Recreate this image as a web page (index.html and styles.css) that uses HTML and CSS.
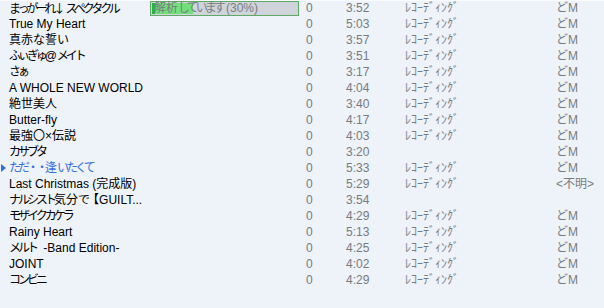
FILE: index.html
```html
<!DOCTYPE html>
<html>
<head>
<meta charset="utf-8">
<link rel="stylesheet" href="styles.css">
</head>
<body>
<div class="list">
  <div class="row"><span class="mark"></span><span class="title"><span class="k">まっがーれ</span><span class="arrow">↓</span><span class="k">スペクタクル</span></span><span class="status"><span class="bar"><span class="fill" style="width:28%"></span><span class="bar-text">解析<span class="k">しています</span> (30%)</span></span></span><span class="num">0</span><span class="time">3:52</span><span class="genre">ﾚｺｰﾃﾞｨﾝｸﾞ</span><span class="artist">どM</span></div>
  <div class="row"><span class="mark"></span><span class="title">True My Heart</span><span class="status"></span><span class="num">0</span><span class="time">5:03</span><span class="genre">ﾚｺｰﾃﾞｨﾝｸﾞ</span><span class="artist">どM</span></div>
  <div class="row"><span class="mark"></span><span class="title">真赤な誓い</span><span class="status"></span><span class="num">0</span><span class="time">3:57</span><span class="genre">ﾚｺｰﾃﾞｨﾝｸﾞ</span><span class="artist">どM</span></div>
  <div class="row"><span class="mark"></span><span class="title"><span class="k">ふぃぎゅ</span>@<span class="k">メイト</span></span><span class="status"></span><span class="num">0</span><span class="time">3:51</span><span class="genre">ﾚｺｰﾃﾞｨﾝｸﾞ</span><span class="artist">どM</span></div>
  <div class="row"><span class="mark"></span><span class="title"><span class="k">さぁ</span></span><span class="status"></span><span class="num">0</span><span class="time">3:17</span><span class="genre">ﾚｺｰﾃﾞｨﾝｸﾞ</span><span class="artist">どM</span></div>
  <div class="row"><span class="mark"></span><span class="title">A WHOLE NEW WORLD</span><span class="status"></span><span class="num">0</span><span class="time">4:04</span><span class="genre">ﾚｺｰﾃﾞｨﾝｸﾞ</span><span class="artist">どM</span></div>
  <div class="row"><span class="mark"></span><span class="title">絶世美人</span><span class="status"></span><span class="num">0</span><span class="time">3:40</span><span class="genre">ﾚｺｰﾃﾞｨﾝｸﾞ</span><span class="artist">どM</span></div>
  <div class="row"><span class="mark"></span><span class="title">Butter-fly</span><span class="status"></span><span class="num">0</span><span class="time">4:17</span><span class="genre">ﾚｺｰﾃﾞｨﾝｸﾞ</span><span class="artist">どM</span></div>
  <div class="row"><span class="mark"></span><span class="title">最強〇×伝説</span><span class="status"></span><span class="num">0</span><span class="time">4:03</span><span class="genre">ﾚｺｰﾃﾞｨﾝｸﾞ</span><span class="artist">どM</span></div>
  <div class="row"><span class="mark"></span><span class="title"><span class="k">カサブタ</span></span><span class="status"></span><span class="num">0</span><span class="time">3:20</span><span class="genre"></span><span class="artist">どM</span></div>
  <div class="row playing"><span class="mark"><svg width="5" height="8" viewBox="0 0 5 8"><path d="M0 0L5 4L0 8Z" fill="#3a6fd8"/></svg></span><span class="title"><span class="k">ただ・・</span>逢<span class="k">いたくて</span></span><span class="status"></span><span class="num">0</span><span class="time">5:33</span><span class="genre">ﾚｺｰﾃﾞｨﾝｸﾞ</span><span class="artist">どM</span></div>
  <div class="row"><span class="mark"></span><span class="title">Last Christmas (完成版)</span><span class="status"></span><span class="num">0</span><span class="time">5:29</span><span class="genre">ﾚｺｰﾃﾞｨﾝｸﾞ</span><span class="artist">&lt;不明&gt;</span></div>
  <div class="row"><span class="mark"></span><span class="title"><span class="k">ナルシスト</span>気分<span class="k">で</span>【GUILT...</span><span class="status"></span><span class="num">0</span><span class="time">3:54</span><span class="genre"></span><span class="artist"></span></div>
  <div class="row"><span class="mark"></span><span class="title"><span class="k">モザイクカケラ</span></span><span class="status"></span><span class="num">0</span><span class="time">4:29</span><span class="genre">ﾚｺｰﾃﾞｨﾝｸﾞ</span><span class="artist">どM</span></div>
  <div class="row"><span class="mark"></span><span class="title">Rainy Heart</span><span class="status"></span><span class="num">0</span><span class="time">5:13</span><span class="genre">ﾚｺｰﾃﾞｨﾝｸﾞ</span><span class="artist">どM</span></div>
  <div class="row"><span class="mark"></span><span class="title"><span class="k gap">メルト</span> -Band Edition-</span><span class="status"></span><span class="num">0</span><span class="time">4:25</span><span class="genre">ﾚｺｰﾃﾞｨﾝｸﾞ</span><span class="artist">どM</span></div>
  <div class="row"><span class="mark"></span><span class="title">JOINT</span><span class="status"></span><span class="num">0</span><span class="time">4:02</span><span class="genre">ﾚｺｰﾃﾞｨﾝｸﾞ</span><span class="artist">どM</span></div>
  <div class="row"><span class="mark"></span><span class="title"><span class="k">コンビニ</span></span><span class="status"></span><span class="num">0</span><span class="time">4:29</span><span class="genre">ﾚｺｰﾃﾞｨﾝｸﾞ</span><span class="artist">どM</span></div>
</div>
</body>
</html>
```
FILE: styles.css
```css
html, body {
  margin: 0;
  padding: 0;
  background: #eef2f9;
}
body {
  width: 604px;
  height: 308px;
  overflow: hidden;
  font-family: "Liberation Sans", "Noto Sans CJK JP", sans-serif;
  font-size: 12px;
  border-top: 1px solid #f8fafd;
  box-sizing: border-box;
}
.list {
  display: flex;
  flex-direction: column;
  margin-top: -1px;
}
.row {
  display: grid;
  grid-template-columns: 9px 142px 155px 40px 59px 151px 1fr;
  height: 16px;
  line-height: 16px;
  color: #777b80;
  white-space: nowrap;
}
.k {
  letter-spacing: -3px;
}
.gap {
  margin-right: 4px;
}
.arrow {
  font-family: "Noto Sans CJK JP", sans-serif;
  letter-spacing: -2px;
  margin-right: 2px;
}
.mark {
  display: flex;
  align-items: center;
  padding-left: 1px;
}
.title {
  color: #000;
}
.playing .title {
  color: #3a6fd8;
}
.status {
  display: flex;
  align-items: flex-start;
  padding-top: 1px;
  margin-left: -1px;
}
.bar {
  position: relative;
  display: block;
  width: 147px;
  height: 13px;
  border: 1px solid #5fa865;
  background: #cfd3da;
}
.fill {
  position: absolute;
  left: 1px;
  top: 1px;
  bottom: 1px;
  background: linear-gradient(to right, #2fae4a 0, #2fae4a 3px, #72e07a 3px);
}
.bar-text {
  position: absolute;
  left: 3px;
  top: -2px;
  color: #7a7d82;
  line-height: 16px;
}
```
